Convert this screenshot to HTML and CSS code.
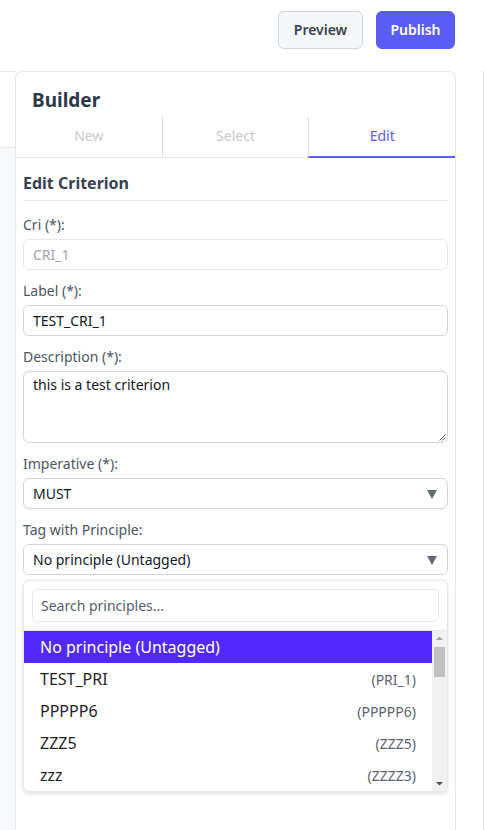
FILE: index.html
```html
<!DOCTYPE html>
<html>
<head>
<meta charset="utf-8">
<link rel="stylesheet" href="styles.css">
</head>
<body>
<header class="topbar">
  <button class="btn btn-light">Preview</button>
  <button class="btn btn-primary">Publish</button>
</header>
<div class="main">
  <div class="canvas-col">
    <div class="canvas-head"></div>
  </div>
  <section class="panel">
    <h2 class="panel-title">Builder</h2>
    <nav class="tabs">
      <div class="tab">New</div>
      <div class="tab">Select</div>
      <div class="tab active">Edit</div>
    </nav>
    <div class="form">
      <h3 class="form-title">Edit Criterion</h3>
      <label class="lbl">Cri (*):</label>
      <div class="input disabled">CRI_1</div>
      <label class="lbl">Label (*):</label>
      <div class="input">TEST_CRI_1</div>
      <label class="lbl">Description (*):</label>
      <div class="input textarea">this is a test criterion
        <svg class="grip" width="9" height="9" viewBox="0 0 9 9"><path d="M8.5 2.5 L2.5 8.5 M8.5 5.5 L5.5 8.5" stroke="#666" stroke-width="1"/></svg>
      </div>
      <label class="lbl">Imperative (*):</label>
      <div class="input select">MUST<svg class="caret" width="10" height="9" viewBox="0 0 10 9"><path d="M0 0 H10 L5 9 Z" fill="#646b76"/></svg></div>
      <label class="lbl">Tag with Principle:</label>
      <div class="input select">No principle (Untagged)<svg class="caret" width="10" height="9" viewBox="0 0 10 9"><path d="M0 0 H10 L5 9 Z" fill="#646b76"/></svg></div>
      <div class="dropdown">
        <div class="search-wrap"><div class="search">Search principles...</div></div>
        <div class="list">
          <div class="opts">
            <div class="opt selected"><span>No principle (Untagged)</span></div>
            <div class="opt"><span>TEST_PRI</span><span class="code">(PRI_1)</span></div>
            <div class="opt"><span>PPPPP6</span><span class="code">(PPPPP6)</span></div>
            <div class="opt"><span>ZZZ5</span><span class="code">(ZZZ5)</span></div>
            <div class="opt"><span>zzz</span><span class="code">(ZZZZ3)</span></div>
          </div>
          <div class="scrollbar">
            <svg class="arrow" width="15" height="14" viewBox="0 0 15 14"><path d="M4 9 H11 L7.5 5.5 Z" fill="#a3a3a3"/></svg>
            <div class="track"><div class="thumb"></div></div>
            <svg class="arrow" width="15" height="14" viewBox="0 0 15 14"><path d="M4 5 H11 L7.5 8.5 Z" fill="#505050"/></svg>
          </div>
        </div>
      </div>
    </div>
  </section>
  <div class="gutter"></div>
  <div class="edge"></div>
</div>
</body>
</html>
```

FILE: styles.css
```css
* { box-sizing: border-box; }
html, body { margin: 0; padding: 0; }
body {
  width: 485px;
  height: 830px;
  overflow: hidden;
  background: #fff;
  font-family: "Noto Sans", "Open Sans", sans-serif;
  color: #111827;
}
.topbar {
  height: 71px;
  display: flex;
  justify-content: flex-end;
  align-items: flex-start;
  gap: 13px;
  padding: 11px 30px 0 0;
}
.btn {
  height: 38px;
  border-radius: 6px;
  font-family: inherit;
  font-size: 14px;
  font-weight: 600;
  padding: 0 0 2px;
  cursor: pointer;
}
.btn-light {
  width: 85px;
  background: #f6f7f9;
  border: 1px solid #d1d5db;
  color: #374151;
}
.btn-primary {
  width: 79px;
  background: #5a5cf6;
  border: 1px solid #5a5cf6;
  color: #fff;
}
.main {
  display: flex;
  height: 759px;
}
.canvas-col {
  width: 15px;
  background: #f7f8fa;
  border-top: 1px solid #e5e7eb;
}
.canvas-head {
  height: 76px;
  background: #fff;
  border-bottom: 1px solid #e5e7eb;
}
.panel {
  width: 441px;
  border: 1px solid #e5e7eb;
  border-bottom: none;
  border-radius: 7px 7px 0 0;
  background: #fff;
}
.gutter { width: 27px; }
.edge {
  width: 2px;
  border-left: 1px solid #e5e7eb;
  background: #f7f8fa;
}
.panel-title {
  margin: 0;
  padding: 16px 0 0 16px;
  height: 45px;
  font-size: 19px;
  font-weight: 700;
  color: #2d3748;
  line-height: 24px;
}
.tabs {
  display: flex;
  height: 41px;
  border-bottom: 1px solid #e5e7eb;
}
.tab {
  flex: 1;
  display: flex;
  align-items: center;
  justify-content: center;
  padding-bottom: 3px;
  font-size: 14px;
  color: #c7c9d1;
  border-left: 1px solid #d9dbe1;
}
.tab:first-child { border-left: none; }
.tab.active {
  color: #5a5cf6;
  border-bottom: 2px solid #5a5cf6;
  margin-bottom: -1px;
}
.form {
  padding: 0 7px;
}
.form-title {
  margin: 0;
  padding: 16px 0 7px;
  font-size: 16px;
  font-weight: 700;
  color: #374151;
  border-bottom: 1px solid #e5e7eb;
  line-height: 19px;
}
.lbl {
  display: block;
  font-size: 14px;
  color: #4b5563;
  line-height: 18px;
  margin: 12px 0 5px;
}
.form-title + .lbl { margin-top: 15px; }
.input {
  position: relative;
  height: 31px;
  border: 1px solid #d1d5db;
  border-radius: 6px;
  padding: 0 9px;
  font-size: 14px;
  line-height: 29px;
  color: #111827;
  background: #fff;
}
.input.disabled { color: #9ca3af; border-color: #e5e7eb; }
.textarea {
  height: 72px;
  line-height: 18px;
  padding-top: 4px;
}
.grip { position: absolute; right: 1px; bottom: 1px; }
.select .caret {
  position: absolute;
  right: 10px;
  top: 11px;
}
.dropdown {
  margin-top: 5px;
  height: 212px;
  border: 1px solid #e5e7eb;
  border-radius: 6px;
  box-shadow: 0 2px 4px rgba(0,0,0,0.12);
  background: #fff;
  overflow: hidden;
}
.search-wrap {
  padding: 8px;
  border-bottom: 1px solid #e5e7eb;
}
.search {
  height: 33px;
  border: 1px solid #e5e7eb;
  border-radius: 5px;
  padding: 0 8px;
  font-size: 14px;
  line-height: 31px;
  color: #555d6a;
}
.list {
  height: 160px;
  display: flex;
}
.opts {
  flex: 1;
  overflow: hidden;
}
.opt {
  height: 32px;
  display: flex;
  justify-content: space-between;
  align-items: center;
  padding: 0 16px;
  font-size: 16px;
  color: #1f2328;
}
.opt.selected { background: #5128fd; color: #fff; }
.opt .code { font-size: 14px; color: #5b6270; }
.scrollbar {
  width: 15px;
  background: #f1f1f1;
  display: flex;
  flex-direction: column;
}
.arrow { display: block; flex: none; }
.track { flex: 1; padding: 2px 2px 0; }
.thumb {
  height: 30px;
  background: #c1c1c1;
}
```
